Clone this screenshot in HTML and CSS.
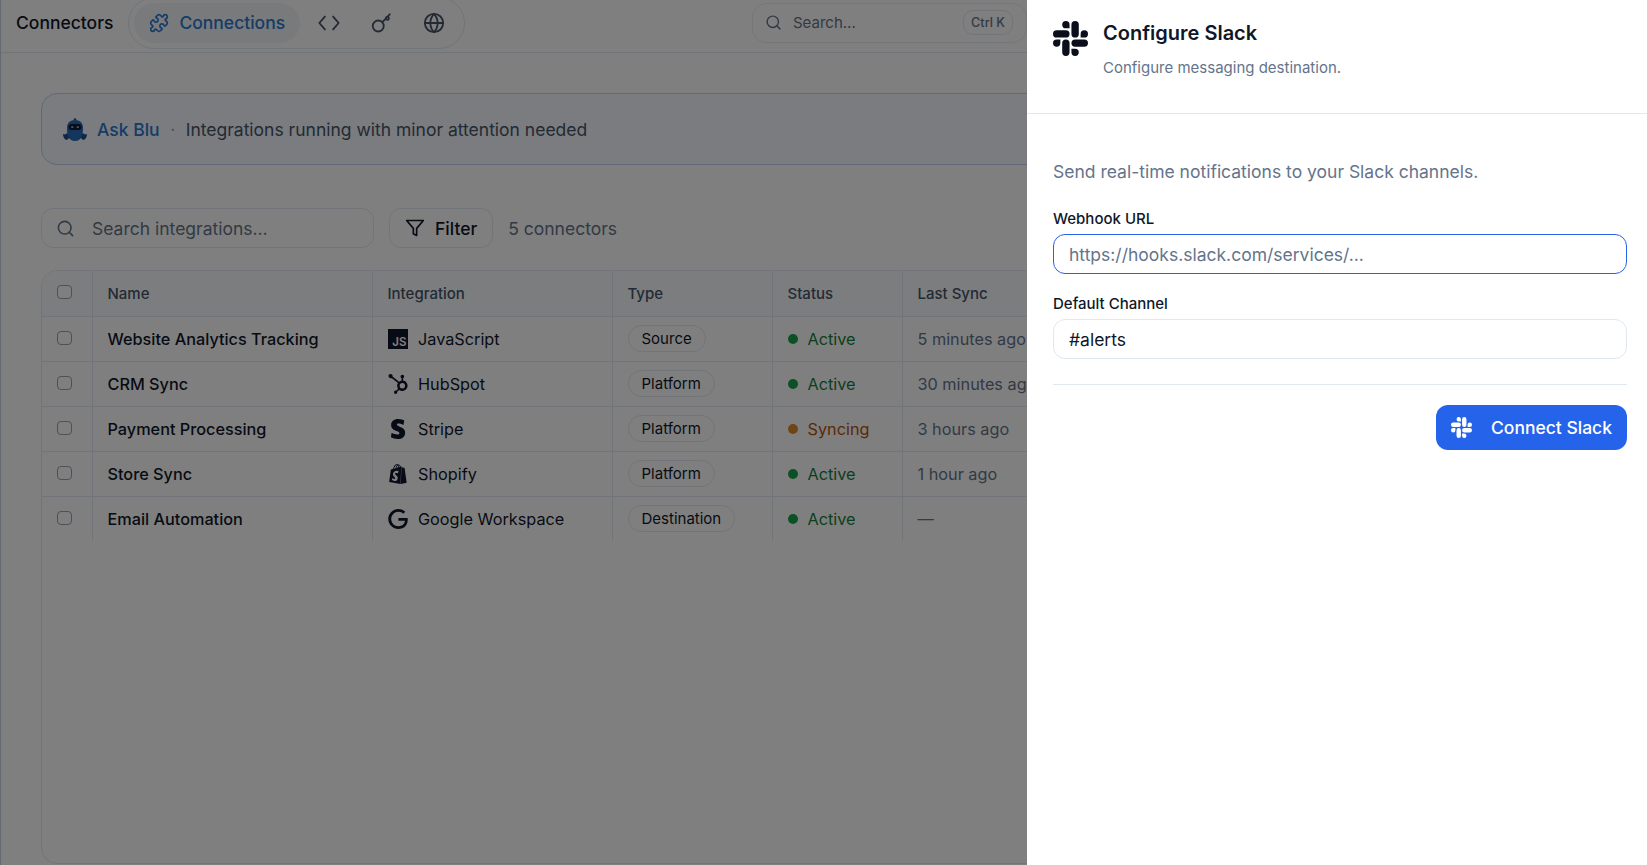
FILE: index.html
```html
<!DOCTYPE html>
<html lang="en">
<head>
    <meta charset="UTF-8">
    <title>Connectors</title>
    <link rel="stylesheet" href="styles.css">
</head>
<body>
<div class="page">
    <header class="topbar">
        <span class="topbar-title">Connectors</span>
        <nav class="nav-pill">
            <a class="nav-active">
                <svg class="icon-20" viewBox="0 0 24 24"><path d="M15.39 4.39a1 1 0 0 0 1.68-.474 2.5 2.5 0 1 1 3.014 3.015 1 1 0 0 0-.474 1.68l1.683 1.682a2.414 2.414 0 0 1 0 3.414L19.61 15.39a1 1 0 0 1-1.68-.474 2.5 2.5 0 1 0-3.014 3.015 1 1 0 0 1 .474 1.68l-1.683 1.682a2.414 2.414 0 0 1-3.414 0L8.61 19.61a1 1 0 0 0-1.68.474 2.5 2.5 0 1 1-3.014-3.015 1 1 0 0 0 .474-1.68l-1.683-1.682a2.414 2.414 0 0 1 0-3.414L4.39 8.61a1 1 0 0 1 1.68.474 2.5 2.5 0 1 0 3.014-3.015 1 1 0 0 1-.474-1.68l1.683-1.682a2.414 2.414 0 0 1 3.414 0z"/></svg>
                Connections
            </a>
            <a class="nav-item">
                <svg class="icon-22" viewBox="0 0 24 24"><path d="m16.500 19 6-7-6-7"/><path d="m7.500 5-6 7 6 7"/></svg>
            </a>
            <a class="nav-item">
                <svg class="icon-22" viewBox="0 0 24 24"><circle cx="9" cy="15.300" r="6"/><path d="m13.500 11 8-8.500"/><circle cx="19" cy="7" r="1.600"/></svg>
            </a>
            <a class="nav-item">
                <svg class="icon-22" viewBox="0 0 24 24"><circle cx="12" cy="12" r="10"/><path d="M12 2a14.5 14.5 0 0 0 0 20 14.5 14.5 0 0 0 0-20"/><path d="M2 12h20"/></svg>
            </a>
        </nav>
        <div class="global-search">
            <svg class="icon-16" viewBox="0 0 24 24"><circle cx="11" cy="11" r="8"/><path d="m21 21-4.3-4.3"/></svg>
            <span class="global-search-text">Search...</span>
            <kbd class="shortcut">Ctrl K</kbd>
        </div>
    </header>

    <main class="content">
        <div class="banner">
            <svg class="blu" viewBox="0 0 26 26">
                <circle cx="13" cy="2.5" r="1.2" fill="#1d4e89"/>
                <path d="M1 17c2 1 3 0 4-1l3 4-3 3c-2 0-4-3-4-6zM25 17c-2 1-3 0-4-1l-3 4 3 3c2 0 4-3 4-6z" fill="#1d4e89"/>
                <path d="M13 3c6 0 8 4 8 8 0 6-1 13-8 13S5 17 5 11c0-4 2-8 8-8z" fill="#2a6cb8"/>
                <rect x="6.500" y="7" width="13" height="6" rx="3" fill="#0f1c33"/>
                <rect x="9" y="9.500" width="2.500" height="1.200" rx=".6" fill="#cfe0f5"/>
                <rect x="14.500" y="9.500" width="2.500" height="1.200" rx=".6" fill="#cfe0f5"/>
            </svg>
            <span class="banner-name">Ask Blu</span>
            <span class="banner-dot">·</span>
            <span class="banner-text">Integrations running with minor attention needed</span>
        </div>

        <div class="toolbar">
            <div class="table-search">
                <svg class="icon-18" viewBox="0 0 24 24"><circle cx="11" cy="11" r="8"/><path d="m21 21-4.3-4.3"/></svg>
                <span>Search integrations...</span>
            </div>
            <button class="filter-btn">
                <svg class="icon-20" viewBox="0 0 24 24"><path d="M22 3H2l8 9.460V19l4 2v-8.540L22 3z"/></svg>
                Filter
            </button>
            <span class="count">5 connectors</span>
        </div>

        <div class="table-wrap">
            <table class="table">
                <thead>
                    <tr>
                        <th class="col-check"><span class="checkbox"></span></th>
                        <th class="col-name">Name</th>
                        <th class="col-integration">Integration</th>
                        <th class="col-type">Type</th>
                        <th class="col-status">Status</th>
                        <th>Last Sync</th>
                    </tr>
                </thead>
                <tbody>
                    <tr>
                        <td class="col-check"><span class="checkbox"></span></td>
                        <td class="name">Website Analytics Tracking</td>
                        <td><div class="integration"><span class="js-logo">JS</span>JavaScript</div></td>
                        <td><span class="badge">Source</span></td>
                        <td><div class="status"><i class="dot"></i>Active</div></td>
                        <td class="sync">5 minutes ago</td>
                    </tr>
                    <tr>
                        <td class="col-check"><span class="checkbox"></span></td>
                        <td class="name">CRM Sync</td>
                        <td><div class="integration"><svg class="logo" viewBox="0 0 24 24"><path d="M18.164 7.930V5.084a2.198 2.198 0 001.267-1.978v-.067A2.200 2.200 0 0017.238.845h-.067a2.200 2.200 0 00-2.193 2.193v.067a2.196 2.196 0 001.252 1.973l.013.006v2.852a6.220 6.220 0 00-2.969 1.310l.012-.010-7.828-6.095A2.497 2.497 0 104.300 4.656l-.012.006 7.697 5.991a6.176 6.176 0 00-1.038 3.446c0 1.343.425 2.588 1.147 3.607l-.013-.020-2.342 2.343a1.968 1.968 0 00-.580-.095h-.002a2.033 2.033 0 102.033 2.033 1.978 1.978 0 00-.100-.595l.005.014 2.317-2.317a6.247 6.247 0 104.782-11.134l-.036-.005zm-.964 9.378a3.206 3.206 0 113.215-3.207v.002a3.206 3.206 0 01-3.207 3.206z"/></svg>HubSpot</div></td>
                        <td><span class="badge">Platform</span></td>
                        <td><div class="status"><i class="dot"></i>Active</div></td>
                        <td class="sync">30 minutes ago</td>
                    </tr>
                    <tr>
                        <td class="col-check"><span class="checkbox"></span></td>
                        <td class="name">Payment Processing</td>
                        <td><div class="integration"><svg class="logo" viewBox="0 0 24 24"><path d="M13.976 9.150c-2.172-.806-3.356-1.426-3.356-2.409 0-.831.683-1.305 1.901-1.305 2.227 0 4.515.858 6.090 1.631l.890-5.494C18.252.975 15.697 0 12.165 0 9.667 0 7.589.654 6.104 1.872 4.560 3.147 3.757 4.992 3.757 7.218c0 4.039 2.467 5.760 6.476 7.219 2.585.920 3.445 1.574 3.445 2.583 0 .980-.840 1.545-2.354 1.545-1.875 0-4.965-.921-6.990-2.109l-.900 5.555C5.175 22.990 8.385 24 11.714 24c2.641 0 4.843-.624 6.328-1.813 1.664-1.305 2.525-3.236 2.525-5.732 0-4.128-2.524-5.851-6.594-7.305h.003z"/></svg>Stripe</div></td>
                        <td><span class="badge">Platform</span></td>
                        <td><div class="status syncing"><i class="dot"></i>Syncing</div></td>
                        <td class="sync">3 hours ago</td>
                    </tr>
                    <tr>
                        <td class="col-check"><span class="checkbox"></span></td>
                        <td class="name">Store Sync</td>
                        <td><div class="integration"><svg class="logo" viewBox="0 0 24 24"><path d="M15.337 23.979l7.216-1.561s-2.604-17.613-2.625-17.730c-.018-.116-.114-.192-.211-.192s-1.929-.136-1.929-.136-1.275-1.274-1.439-1.411c-.045-.037-.075-.057-.121-.074l-.914 21.104h.023zM11.710 11.305s-.810-.424-1.774-.424c-1.447 0-1.504.906-1.504 1.141 0 1.232 3.240 1.715 3.240 4.629 0 2.295-1.440 3.760-3.406 3.760-2.354 0-3.540-1.465-3.540-1.465l.646-2.086s1.245 1.066 2.280 1.066c.675 0 .975-.545.975-.932 0-1.619-2.654-1.694-2.654-4.359-.034-2.237 1.571-4.416 4.827-4.416 1.257 0 1.875.361 1.875.361l-.945 2.715-.020.010zM11.170.830c.136 0 .271.038.405.135-.984.465-2.064 1.639-2.508 3.992-.656.213-1.293.405-1.889.578C7.697 3.750 8.951.840 11.170.840V.830zm1.235 2.949v.135c-.754.232-1.583.484-2.394.736.466-1.777 1.333-2.645 2.085-2.971.193.501.309 1.176.309 2.100zm.539-2.234c.694.074 1.141.867 1.429 1.755-.349.114-.735.231-1.158.366v-.252c0-.752-.096-1.371-.271-1.871v.002zm2.992 1.289c-.020 0-.060.021-.078.021s-.289.075-.714.210c-.423-1.233-1.176-2.370-2.508-2.370h-.115C12.135.209 11.669 0 11.265 0 8.159 0 6.675 3.877 6.210 5.846c-1.194.365-2.063.636-2.160.674-.675.213-.694.232-.772.870-.075.462-1.830 14.063-1.830 14.063L15.009 24l.927-21.166z"/></svg>Shopify</div></td>
                        <td><span class="badge">Platform</span></td>
                        <td><div class="status"><i class="dot"></i>Active</div></td>
                        <td class="sync">1 hour ago</td>
                    </tr>
                    <tr>
                        <td class="col-check"><span class="checkbox"></span></td>
                        <td class="name">Email Automation</td>
                        <td><div class="integration"><svg class="logo" viewBox="0 0 24 24"><path d="M12.480 10.920v3.280h7.840c-.240 1.840-.853 3.187-1.787 4.133-1.147 1.147-2.933 2.400-6.053 2.400-4.827 0-8.600-3.893-8.600-8.720s3.773-8.720 8.600-8.720c2.600 0 4.507 1.027 5.907 2.347l2.307-2.307C18.747 1.440 16.133 0 12.480 0 5.867 0 .307 5.387.307 12s5.560 12 12.173 12c3.573 0 6.267-1.173 8.373-3.360 2.160-2.160 2.840-5.213 2.840-7.667 0-.760-.053-1.467-.173-2.053H12.480z"/></svg>Google Workspace</div></td>
                        <td><span class="badge">Destination</span></td>
                        <td><div class="status"><i class="dot"></i>Active</div></td>
                        <td class="sync">—</td>
                    </tr>
                </tbody>
            </table>
        </div>
    </main>
</div>

<div class="overlay"></div>

<aside class="panel">
    <div class="panel-head">
        <svg class="slack-big" viewBox="0 0 24 24"><path d="M5.042 15.165a2.528 2.528 0 0 1-2.520 2.523A2.528 2.528 0 0 1 0 15.165a2.527 2.527 0 0 1 2.522-2.520h2.520v2.520zM6.313 15.165a2.527 2.527 0 0 1 2.521-2.520 2.527 2.527 0 0 1 2.521 2.520v6.313A2.528 2.528 0 0 1 8.834 24a2.528 2.528 0 0 1-2.521-2.522v-6.313zM8.834 5.042a2.528 2.528 0 0 1-2.521-2.520A2.528 2.528 0 0 1 8.834 0a2.528 2.528 0 0 1 2.521 2.522v2.520H8.834zM8.834 6.313a2.528 2.528 0 0 1 2.521 2.521 2.528 2.528 0 0 1-2.521 2.521H2.522A2.528 2.528 0 0 1 0 8.834a2.528 2.528 0 0 1 2.522-2.521h6.312zM18.956 8.834a2.528 2.528 0 0 1 2.522-2.521A2.528 2.528 0 0 1 24 8.834a2.528 2.528 0 0 1-2.522 2.521h-2.522V8.834zM17.688 8.834a2.528 2.528 0 0 1-2.523 2.521 2.527 2.527 0 0 1-2.520-2.521V2.522A2.527 2.527 0 0 1 15.165 0a2.528 2.528 0 0 1 2.523 2.522v6.312zM15.165 18.956a2.528 2.528 0 0 1 2.523 2.522A2.528 2.528 0 0 1 15.165 24a2.527 2.527 0 0 1-2.520-2.522v-2.522h2.520zM15.165 17.688a2.527 2.527 0 0 1-2.520-2.523 2.526 2.526 0 0 1 2.520-2.520h6.313A2.527 2.527 0 0 1 24 15.165a2.528 2.528 0 0 1-2.522 2.523h-6.313z"/></svg>
        <div>
            <h2 class="panel-title">Configure Slack</h2>
            <p class="panel-sub">Configure messaging destination.</p>
        </div>
    </div>
    <div class="panel-body">
        <p class="panel-intro">Send real-time notifications to your Slack channels.</p>
        <label class="field-label">Webhook URL</label>
        <div class="field field-focus">https://hooks.slack.com/services/...</div>
        <label class="field-label">Default Channel</label>
        <div class="field field-value">#alerts</div>
        <div class="panel-actions">
            <button class="connect-btn">
                <svg class="slack-small" viewBox="0 0 24 24"><path d="M5.042 15.165a2.528 2.528 0 0 1-2.520 2.523A2.528 2.528 0 0 1 0 15.165a2.527 2.527 0 0 1 2.522-2.520h2.520v2.520zM6.313 15.165a2.527 2.527 0 0 1 2.521-2.520 2.527 2.527 0 0 1 2.521 2.520v6.313A2.528 2.528 0 0 1 8.834 24a2.528 2.528 0 0 1-2.521-2.522v-6.313zM8.834 5.042a2.528 2.528 0 0 1-2.521-2.520A2.528 2.528 0 0 1 8.834 0a2.528 2.528 0 0 1 2.521 2.522v2.520H8.834zM8.834 6.313a2.528 2.528 0 0 1 2.521 2.521 2.528 2.528 0 0 1-2.521 2.521H2.522A2.528 2.528 0 0 1 0 8.834a2.528 2.528 0 0 1 2.522-2.521h6.312zM18.956 8.834a2.528 2.528 0 0 1 2.522-2.521A2.528 2.528 0 0 1 24 8.834a2.528 2.528 0 0 1-2.522 2.521h-2.522V8.834zM17.688 8.834a2.528 2.528 0 0 1-2.523 2.521 2.527 2.527 0 0 1-2.520-2.521V2.522A2.527 2.527 0 0 1 15.165 0a2.528 2.528 0 0 1 2.523 2.522v6.312zM15.165 18.956a2.528 2.528 0 0 1 2.523 2.522A2.528 2.528 0 0 1 15.165 24a2.527 2.527 0 0 1-2.520-2.522v-2.522h2.520zM15.165 17.688a2.527 2.527 0 0 1-2.520-2.523 2.526 2.526 0 0 1 2.520-2.520h6.313A2.527 2.527 0 0 1 24 15.165a2.528 2.528 0 0 1-2.522 2.523h-6.313z"/></svg>
                Connect Slack
            </button>
        </div>
    </div>
</aside>
</body>
</html>
```

FILE: styles.css
```css
*{
    margin: 0;
    padding: 0;
    box-sizing: border-box;
}
html, body{
    width: 100%;
    height: 100%;
    overflow: hidden;
}
body{
    font-family: Inter, "Noto Sans", sans-serif;
    background-color: #fff;
    color: #0f172a;
}
svg{
    fill: none;
    stroke: currentColor;
    stroke-width: 2;
    stroke-linecap: round;
    stroke-linejoin: round;
    flex-shrink: 0;
}
.icon-16{ width: 17px; height: 17px; }
.icon-18{ width: 19px; height: 19px; }
.icon-20{ width: 20px; height: 20px; }
.icon-22{ width: 22px; height: 22px; }

/*page under the overlay*/
.page{
    height: 100%;
    display: flex;
    flex-direction: column;
    border-left: 1px solid #cbd5e1;
}
.topbar{
    height: 53px;
    flex-shrink: 0;
    padding: 0 0 6px 15px;
    display: flex;
    align-items: center;
    border-bottom: 1px solid #e2e8f0;
}
.topbar-title{
    padding-bottom: 1px;
    font-size: 17.500px;
    font-weight: 500;
    margin-right: 15px;
}
.nav-pill{
    height: 52px;
    padding: 0 7px 0 5px;
    display: flex;
    align-items: center;
    gap: 6.500px;
    border: 1px solid #e2e8f0;
    border-radius: 26px;
}
.nav-active{
    height: 40px;
    padding: 0 15px 1px;
    margin-right: -1px;
    display: flex;
    align-items: center;
    gap: 10px;
    border-radius: 20px;
    background-color: #f1f5f9;
    color: #2a78d0;
    font-size: 17.500px;
    font-weight: 500;
}
.nav-item{
    width: 46px;
    height: 40px;
    display: flex;
    align-items: center;
    justify-content: center;
    color: #475569;
}
.global-search{
    width: 275px;
    height: 40px;
    margin-left: auto;
    margin-right: 620px;
    padding: 0 13px 1px 12px;
    display: flex;
    align-items: center;
    gap: 11px;
    border: 1px solid #e8edf3;
    border-radius: 14px;
    color: #64748b;
    font-size: 15px;
}
.global-search-text{
    flex: 1;
}
.shortcut{
    height: 25px;
    width: 50px;
    padding-bottom: 1px;
    display: flex;
    align-items: center;
    justify-content: center;
    border: 1px solid #e2e8f0;
    border-radius: 10px;
    font-family: Inter, sans-serif;
    font-size: 12.600px;
    font-weight: 500;
}
.content{
    flex: 1;
    padding: 40px 0 1px 40px;
    display: flex;
    flex-direction: column;
    min-height: 0;
}
.banner{
    height: 72px;
    padding: 1px 20px 0;
    display: flex;
    align-items: center;
    border: 1px solid #bfd3f0;
    border-radius: 16px;
    background-color: #f5f8fe;
    font-size: 17.500px;
}
.blu{
    width: 26px;
    height: 26px;
    stroke: none;
    margin-right: 9px;
}
.banner-name{
    color: #2a78d0;
    font-weight: 500;
}
.banner-dot{
    margin: 0 10.500px;
    color: #94a3b8;
}
.banner-text{
    color: #475569;
}
.toolbar{
    margin-top: 43px;
    display: flex;
    align-items: center;
}
.table-search{
    width: 333px;
    height: 40px;
    padding: 0 14px;
    display: flex;
    align-items: center;
    gap: 17px;
    border: 1px solid #e2e8f0;
    border-radius: 12px;
    color: #64748b;
    font-size: 17.500px;
}
.filter-btn{
    height: 40px;
    margin-left: 15px;
    padding: 0 15px;
    display: flex;
    align-items: center;
    gap: 10px;
    border: 1px solid #e2e8f0;
    border-radius: 12px;
    background: none;
    font-family: inherit;
    color: #0f172a;
    font-size: 17.500px;
    font-weight: 500;
}
.count{
    margin-left: 15px;
    font-size: 17.500px;
    color: #64748b;
}
.table-wrap{
    flex: 1;
    margin-top: 22px;
    border: 1px solid #e2e8f0;
    border-radius: 16px;
    overflow: hidden;
}
.table{
    border-collapse: collapse;
    table-layout: fixed;
    width: 1400px;
}
.table th{
    height: 45px;
    padding: 0 15px;
    text-align: left;
    font-size: 15px;
    font-weight: 500;
    color: #475569;
    background-color: #f8fafc;
    border-right: 1px solid #e2e8f0;
    border-bottom: 1px solid #e2e8f0;
}
.table td{
    height: 45px;
    padding: 0 15px;
    font-size: 16.250px;
    white-space: nowrap;
    border-right: 1px solid #e2e8f0;
    border-bottom: 1px solid #e2e8f0;
}
.table tbody tr:last-child td{
    border-bottom: none;
}
.col-check{ width: 50px; }
.col-name{ width: 280px; }
.col-integration{ width: 240px; }
.col-type{ width: 160px; }
.col-status{ width: 130px; }
.checkbox{
    display: block;
    width: 15px;
    height: 14px;
    margin-bottom: 2px;
    border: 1px solid #94a3b8;
    border-radius: 4px;
    background-color: #fff;
}
.name{
    font-weight: 500;
}
.integration{
    display: flex;
    align-items: center;
    gap: 10.500px;
}
.logo{
    width: 20px;
    height: 20px;
    fill: #0f172a;
    stroke: none;
}
.js-logo{
    width: 20px;
    height: 20px;
    display: flex;
    align-items: flex-end;
    justify-content: flex-end;
    padding-right: 1px;
    background-color: #0f172a;
    color: #fff;
    font-size: 11.500px;
    font-weight: 600;
    line-height: 13px;
}
.badge{
    display: inline-block;
    height: 27px;
    padding: 0 13px;
    border: 1px solid #e2e8f0;
    border-radius: 14px;
    font-size: 15px;
    line-height: 25px;
}
.status{
    display: flex;
    align-items: center;
    gap: 10px;
    color: #15803d;
}
.dot{
    width: 10px;
    height: 10px;
    border-radius: 50%;
    background-color: #16a34a;
}
.syncing{
    color: #b45309;
}
.syncing .dot{
    background-color: #e08a2c;
}
.sync{
    color: #64748b;
}

/*dialog*/
.overlay{
    position: fixed;
    left: 0;
    top: 0;
    width: 100%;
    height: 100%;
    background-color: rgba(0, 0, 0, 0.5);
    backdrop-filter: blur(.5px);
}
.panel{
    position: fixed;
    right: 0;
    top: 0;
    width: 620px;
    height: 100%;
    background-color: #fff;
}
.panel-head{
    height: 114px;
    padding: 21px 20px 0 26px;
    display: flex;
    gap: 15px;
    border-bottom: 1px solid #e5e7eb;
}
.slack-big{
    width: 35px;
    height: 35px;
    fill: #0b0f1c;
    stroke: none;
}
.panel-title{
    font-size: 20px;
    font-weight: 600;
    line-height: 25px;
}
.panel-sub{
    margin-top: 12px;
    font-size: 15px;
    line-height: 20px;
    color: #64748b;
}
.panel-body{
    padding: 46px 20px 0 26px;
}
.panel-intro{
    font-size: 17.500px;
    line-height: 24px;
    color: #64748b;
}
.field-label{
    display: block;
    margin-top: 25px;
    font-size: 15px;
    font-weight: 450;
    line-height: 20px;
}
.field-label + .field{
    margin-top: 5px;
}
.field{
    height: 40px;
    padding: 0 15px;
    display: flex;
    align-items: center;
    border: 1px solid #e2e8f0;
    border-radius: 12px;
    font-size: 17.500px;
}
.field-focus{
    border-color: #2563eb;
    color: #64748b;
    margin-bottom: -5px;
}
.panel-actions{
    margin-top: 25px;
    padding-top: 20px;
    display: flex;
    justify-content: flex-end;
    border-top: 1px solid #e2e8f0;
}
.connect-btn{
    width: 191px;
    height: 45px;
    padding: 0 15px;
    display: flex;
    align-items: center;
    gap: 19px;
    border: none;
    border-radius: 12px;
    background-color: #2563eb;
    color: #fff;
    font-family: inherit;
    font-size: 17.500px;
    font-weight: 500;
}
.slack-small{
    width: 21px;
    height: 21px;
    fill: #fff;
    stroke: none;
}
```
